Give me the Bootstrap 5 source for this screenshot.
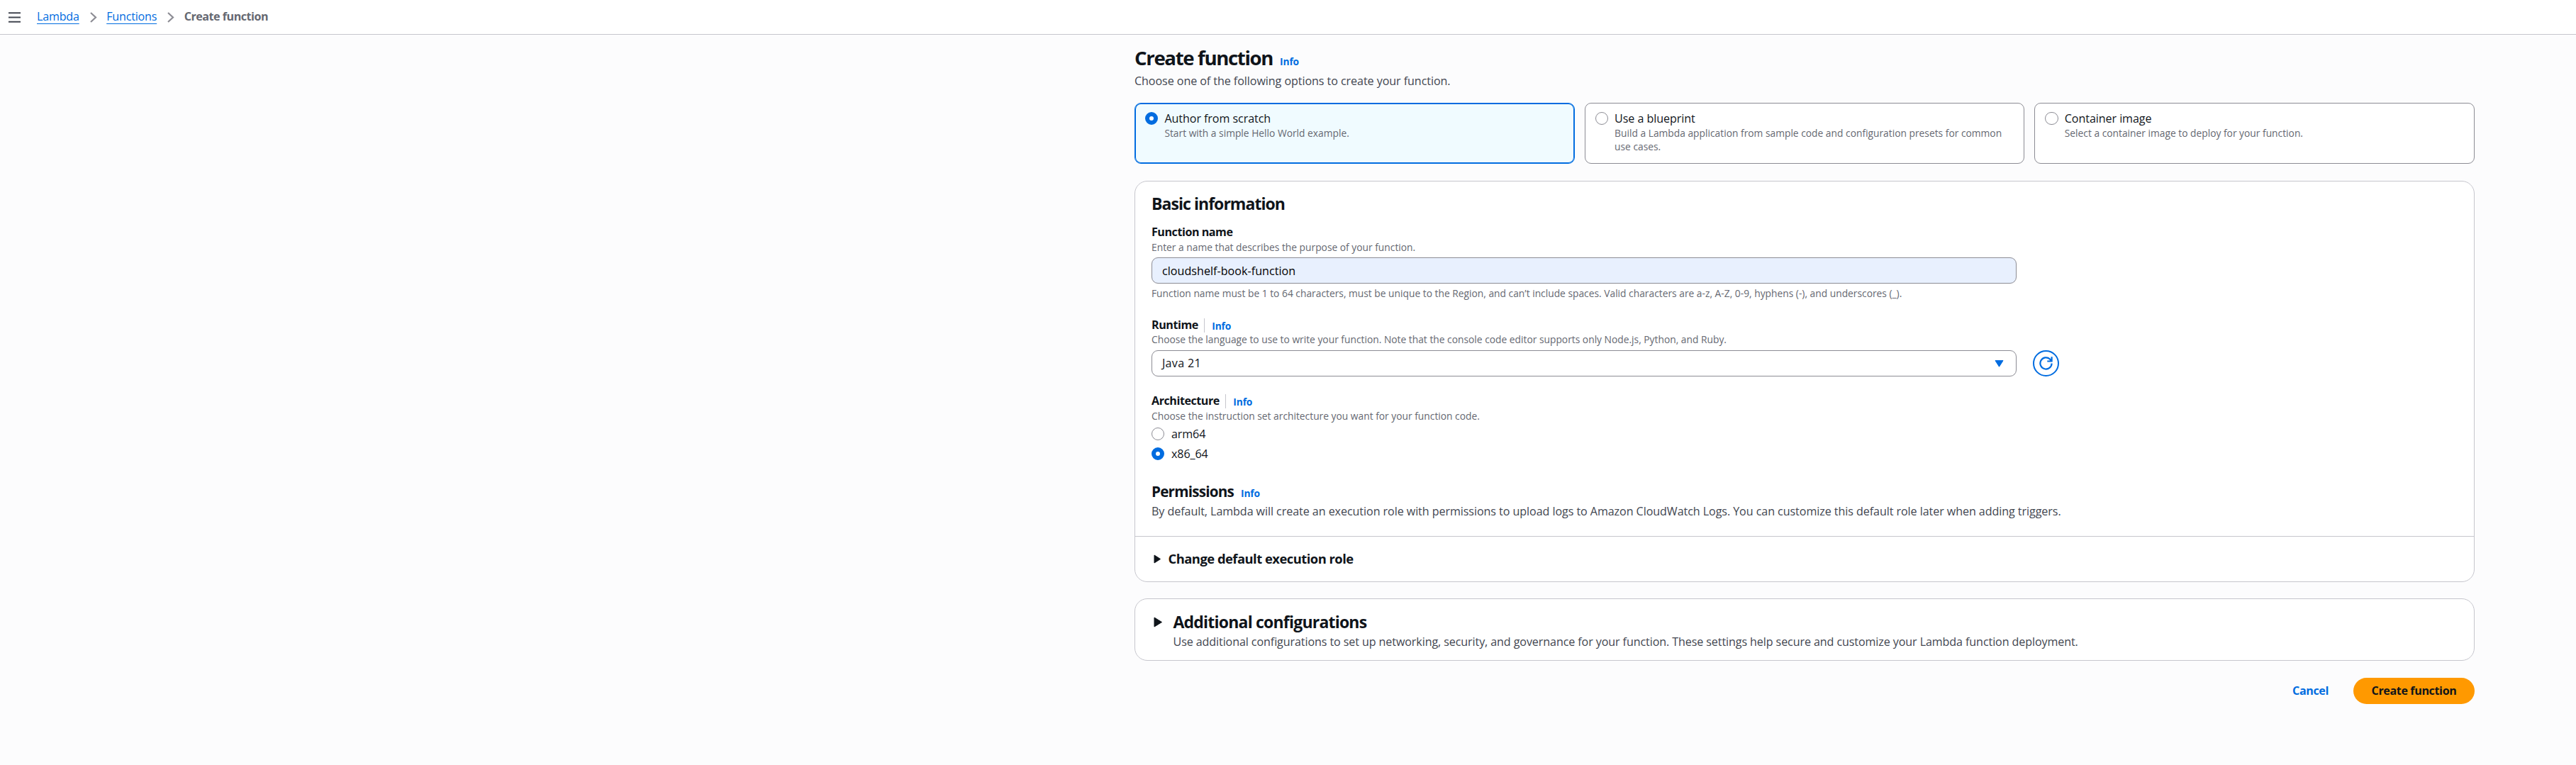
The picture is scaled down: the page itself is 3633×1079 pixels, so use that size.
<!DOCTYPE html>
<html lang="en">
<head>
<meta charset="utf-8">
<meta name="viewport" content="width=device-width, initial-scale=1">
<title>Create function</title>
<link rel="stylesheet" href="https://cdn.jsdelivr.net/npm/bootstrap@5.3.0/dist/css/bootstrap.min.css">
<style>
  :root { --blue: #006ce0; --ink: #0f141a; --muted: #656871; --soft: #424650; --edge: #8c8c94; --line: #c6c6cd; }
  body { font-family: "Open Sans", "Noto Sans", sans-serif; font-size: 16.1px; line-height: 24px; letter-spacing: -.07px; color: var(--ink); background: #fcfcfd; min-height: 1079px; }
  svg { display: block; flex: none; }
  .topbar { height: 49px; padding: 0 0 2px 12px; border-bottom: 1px solid var(--line); }
  .menu-icon { margin: 2px 23px 0 0; }
  .crumbs a { color: var(--blue); text-decoration: underline; text-decoration-thickness: 1px; text-underline-offset: 4px; letter-spacing: -.2px; }
  .crumbs svg { margin: 3px 13.5px 0 15px; }
  .crumbs strong { color: var(--muted); letter-spacing: -.48px; }
  .create-page { width: 1890px; margin-left: 1600px; padding-top: 15px; }
  h1, h2, h3, p { margin: 0; }
  h1 { font-size: 27.6px; line-height: 34px; font-weight: 700; letter-spacing: -1.35px; }
  h2 { font-size: 23px; line-height: 28px; font-weight: 700; letter-spacing: -.95px; }
  h2.addl { letter-spacing: -.79px; }
  h3 { font-size: 20.7px; line-height: 26px; font-weight: 700; letter-spacing: -.8px; }
  .info { font-size: 13.8px; line-height: 16px; font-weight: 700; color: var(--blue); text-decoration: none; letter-spacing: -.15px; margin-left: 10px; }
  .soft { color: var(--soft); }
  .hint { font-size: 13.8px; line-height: 19px; color: var(--muted); letter-spacing: 0; }
  .field-label { font-weight: 700; letter-spacing: -.46px; }
  .field-label .info { border-left: 1px solid var(--line); height: 20px; line-height: 21px; margin: 3px 0 0 8px; padding-left: 10.5px; }
  .tiles { gap: 14px; margin-top: 19px; }
  .tile { flex: 1 1 0; height: 86px; border: 1px solid var(--edge); border-radius: 9px; background: #fff; padding: 9px 30px 0 14px; gap: 9px; }
  .tile.picked { border-color: var(--blue); box-shadow: inset 0 0 0 1px var(--blue); background: #f0fbff; }
  .tile .form-check-input { margin-top: 3px; }
  .tile .hint { margin-top: -1px; }
  .form-check-input { width: 18.4px; height: 18.4px; margin: 0; border: 1px solid var(--edge); flex: none; }
  .form-check-input:checked[type=radio] { background: #fff; border: 6px solid var(--blue); }
  .choice { gap: 9.5px; margin-top: 4px; }
  .panel { border: 1px solid var(--line); border-radius: 18px; background: #fff; }
  .pad { padding: 17px 23px 23px; }
  .field { width: 1220px; height: 37px; padding: 0 17px 0 14px; border: 1px solid var(--edge); border-radius: 9px; font-size: 16.1px; line-height: 35px; color: var(--ink); letter-spacing: .3px; }
  input.field, input.field:focus { background: #e8f0fe; color: #000; letter-spacing: .03px; margin-top: 5px; }
  .refresh { width: 37px; height: 37px; border: 2px solid var(--blue); border-radius: 50%; background: #fff; margin-left: 23px; padding: 0; }
  .runtime-row { margin-top: 6px; }
  .expand { border-top: 1px solid var(--line); padding: 19px 26px 20px; font-size: 18.4px; line-height: 24px; font-weight: 700; letter-spacing: -.52px; gap: 9.5px; }
  .extra { margin-top: 23px; height: 88px; padding: 18px 26px 0; }
  .extra svg { margin: 7px 14.5px 0 0; }
  .extra .soft { margin-top: 2px; letter-spacing: -.1px; }
  .actions { margin-top: 24px; gap: 35px; }
  .actions .btn { font-size: 16.1px; font-weight: 700; letter-spacing: -.38px; height: 37px; line-height: 35px; padding: 0; border: 0; }
  .actions .btn.cancel { color: var(--blue); }
  .actions .btn.create { width: 171px; background: #ff9900; color: var(--ink); border-radius: 19px; }
</style>
<script src="https://cdn.jsdelivr.net/npm/bootstrap@5.3.0/dist/js/bootstrap.bundle.min.js"></script>
</head>
<body>
<header class="topbar d-flex align-items-center bg-white">
  <svg class="menu-icon" width="17" height="15" viewBox="0 0 17 15"><path d="M0 1.2h17M0 7.5h17M0 13.7h17" stroke="#424650" stroke-width="2"/></svg>
  <nav class="crumbs d-flex align-items-center">
    <a href="#">Lambda</a>
    <svg width="10" height="15" viewBox="0 0 10 15"><path d="M1 1l7 6.5L1 14" fill="none" stroke="#8c8c94" stroke-width="2.2"/></svg>
    <a href="#">Functions</a>
    <svg width="10" height="15" viewBox="0 0 10 15"><path d="M1 1l7 6.5L1 14" fill="none" stroke="#8c8c94" stroke-width="2.2"/></svg>
    <strong>Create function</strong>
  </nav>
</header>

<main class="create-page">
  <div class="d-flex align-items-baseline"><h1>Create function</h1><a class="info" href="#">Info</a></div>
  <p class="soft mt-1">Choose one of the following options to create your function.</p>

  <div class="tiles d-flex">
    <label class="tile picked d-flex"><input class="form-check-input" type="radio" name="source" checked><span><span class="d-block">Author from scratch</span><span class="hint d-block">Start with a simple Hello World example.</span></span></label>
    <label class="tile d-flex"><input class="form-check-input" type="radio" name="source"><span><span class="d-block">Use a blueprint</span><span class="hint d-block">Build a Lambda application from sample code and configuration presets for common use cases.</span></span></label>
    <label class="tile d-flex"><input class="form-check-input" type="radio" name="source"><span><span class="d-block">Container image</span><span class="hint d-block">Select a container image to deploy for your function.</span></span></label>
  </div>

  <section class="panel mt-4">
    <div class="pad">
      <h2>Basic information</h2>

      <label class="field-label d-block" style="margin-top:14px" for="fn">Function name</label>
      <p class="hint">Enter a name that describes the purpose of your function.</p>
      <input id="fn" class="form-control field" value="cloudshelf-book-function">
      <p class="hint mt-1">Function name must be 1 to 64 characters, must be unique to the Region, and can’t include spaces. Valid characters are a-z, A-Z, 0-9, hyphens (-), and underscores (_).</p>

      <div class="field-label d-flex" style="margin-top:23px">Runtime<a class="info" href="#">Info</a></div>
      <p class="hint" style="margin-top:-1px">Choose the language to use to write your function. Note that the console code editor supports only Node.js, Python, and Ruby.</p>
      <div class="runtime-row d-flex">
        <div class="field d-flex align-items-center justify-content-between"><span>Java 21</span>
          <svg width="13" height="10" viewBox="0 0 13 10"><path d="M1 .6h11L6.5 9.2z" fill="#006ce0" stroke="#006ce0" stroke-linejoin="round"/></svg>
        </div>
        <button class="refresh d-flex align-items-center justify-content-center" aria-label="Refresh">
          <svg width="21" height="21" viewBox="0 0 21 21" fill="none" stroke="#006ce0" stroke-width="2.2"><path d="M18.6 10.5a8.1 8.1 0 1 1-2.6-6l2.3 2.7M18.6 1.2v6.300h-6.300"/></svg>
        </button>
      </div>

      <div class="field-label d-flex" style="margin-top:22px">Architecture<a class="info" href="#">Info</a></div>
      <p class="hint">Choose the instruction set architecture you want for your function code.</p>
      <label class="choice d-flex align-items-center"><input class="form-check-input" type="radio" name="arch"><span>arm64</span></label>
      <label class="choice d-flex align-items-center"><input class="form-check-input" type="radio" name="arch" checked><span>x86_64</span></label>

      <div class="d-flex align-items-baseline" style="margin-top:28px"><h3>Permissions</h3><a class="info" href="#">Info</a></div>
      <p class="soft" style="margin-top:3px">By default, Lambda will create an execution role with permissions to upload logs to Amazon CloudWatch Logs. You can customize this default role later when adding triggers.</p>
    </div>
    <div class="expand d-flex align-items-center">
      <svg width="11" height="13" viewBox="0 0 11 13"><path d="M1 1l8.5 5.5L1 12z" fill="#0f141a" stroke="#0f141a" stroke-linejoin="round"/></svg>
      <span>Change default execution role</span>
    </div>
  </section>

  <section class="panel extra d-flex">
    <svg width="13" height="15" viewBox="0 0 13 15"><path d="M1 1l10.5 6.5L1 14z" fill="#0f141a" stroke="#0f141a" stroke-linejoin="round"/></svg>
    <div>
      <h2 class="addl">Additional configurations</h2>
      <p class="soft">Use additional configurations to set up networking, security, and governance for your function. These settings help secure and customize your Lambda function deployment.</p>
    </div>
  </section>

  <div class="actions d-flex justify-content-end">
    <button class="btn cancel">Cancel</button>
    <button class="btn create">Create function</button>
  </div>
</main>
</body>
</html>
